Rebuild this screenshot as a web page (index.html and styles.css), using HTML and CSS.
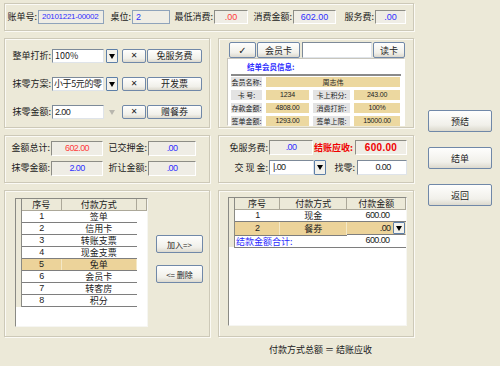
FILE: index.html
```html
<!DOCTYPE html>
<html lang="zh-CN">
<head>
    <meta charset="UTF-8">
    <title>结账</title>
    <link rel="stylesheet" href="styles.css">
</head>
<body>
<div class="app">
    <div class="main">
        <!-- 账单信息 -->
        <div class="panel topbar">
            <span class="lbl">账单号:</span><span class="box flat blue num left bill">20101221-00002</span>
            <span class="lbl">桌位:</span><span class="box flat blue num left">2</span>
            <span class="lbl">最低消费:</span><span class="box red num">.00</span>
            <span class="lbl">消费金额:</span><span class="box blue num">602.00</span>
            <span class="lbl">服务费:</span><span class="box blue num">.00</span>
        </div>

        <div class="row">
            <!-- 折扣与抹零 -->
            <div class="panel options">
                <div class="opt">
                    <span class="lbl">整单打折:</span><span class="input">100%</span><span class="dd"></span>
                    <button class="btn x">✕</button><button class="btn wide">免服务费</button>
                </div>
                <div class="opt">
                    <span class="lbl">抹零方案:</span><span class="input tight">小于5元的零</span><span class="dd"></span>
                    <button class="btn x">✕</button><button class="btn wide">开发票</button>
                </div>
                <div class="opt">
                    <span class="lbl">抹零金额:</span><span class="input num">2.00</span><span class="dd off"></span>
                    <button class="btn x">✕</button><button class="btn wide">赠餐券</button>
                </div>
            </div>

            <!-- 会员卡 -->
            <div class="panel member">
                <div class="cardbar">
                    <button class="btn check">✓</button><button class="btn card">会员卡</button><span class="input cardno"></span><button class="btn read">读卡</button>
                </div>
                <div class="info">
                    <div class="info-title">结单会员信息:</div>
                    <div class="info-grid">
                        <span class="k">会员名称:</span><span class="v all">周志伟</span>
                        <span class="k">卡 号:</span><span class="v num">1234</span><span class="k">卡上积分:</span><span class="v num">243.00</span>
                        <span class="k">存款金额:</span><span class="v num">4808.00</span><span class="k">消费打折:</span><span class="v num">100%</span>
                        <span class="k">签单金额:</span><span class="v num">1293.00</span><span class="k">签单上限:</span><span class="v num">15000.00</span>
                    </div>
                </div>
            </div>
        </div>

        <div class="row sums">
            <div class="panel totals">
                <span class="lbl">金额总计:</span><span class="box red num">602.00</span>
                <span class="lbl">已交押金:</span><span class="box blue num">.00</span>
                <span class="lbl">抹零金额:</span><span class="box blue num">2.00</span>
                <span class="lbl">折让金额:</span><span class="box blue num">.00</span>
            </div>
            <div class="panel settle">
                <div class="srow">
                    <span class="lbl l1">免服务费:</span><span class="box blue num fee">.00</span>
                    <span class="lbl due">结账应收:</span><span class="box due-box num">600.00</span>
                </div>
                <div class="srow">
                    <span class="lbl l1">交 现 金:</span><span class="input num cash">|.00</span><span class="dd"></span>
                    <span class="lbl chg">找零:</span><span class="input num change">0.00</span>
                </div>
            </div>
        </div>

        <div class="row lists">
            <div class="panel methods">
                <div class="grid left-grid">
                    <table>
                        <thead>
                            <tr><th class="ind"></th><th class="c1">序号</th><th class="c2">付款方式</th><th class="c3"></th></tr>
                        </thead>
                        <tbody>
                            <tr><td class="ind"></td><td class="num">1</td><td>签单</td><td class="pad"></td></tr>
                            <tr><td class="ind"></td><td class="num">2</td><td>信用卡</td><td class="pad"></td></tr>
                            <tr><td class="ind"></td><td class="num">3</td><td>转账支票</td><td class="pad"></td></tr>
                            <tr><td class="ind"></td><td class="num">4</td><td>现金支票</td><td class="pad"></td></tr>
                            <tr class="sel"><td class="ind"></td><td class="num">5</td><td>免单</td><td class="pad"></td></tr>
                            <tr><td class="ind"></td><td class="num">6</td><td>会员卡</td><td class="pad"></td></tr>
                            <tr><td class="ind"></td><td class="num">7</td><td>转客房</td><td class="pad"></td></tr>
                            <tr><td class="ind"></td><td class="num">8</td><td>积分</td><td class="pad"></td></tr>
                        </tbody>
                    </table>
                </div>
                <div class="move">
                    <button class="btn">加入=&gt;</button>
                    <button class="btn">&lt;= 删除</button>
                </div>
            </div>
            <div class="panel paid">
                <div class="grid right-grid">
                    <table>
                        <thead>
                            <tr><th class="ind"></th><th class="p1">序号</th><th class="p2">付款方式</th><th class="p3">付款金额</th></tr>
                        </thead>
                        <tbody>
                            <tr><td class="ind"></td><td class="num">1</td><td>现金</td><td class="num amt">600.00</td></tr>
                            <tr class="sel"><td class="ind"></td><td class="num">2</td><td>餐券</td><td class="edit"><span class="num">.00</span><span class="dd"></span></td></tr>
                            <tr class="total"><td class="ind"></td><td colspan="2" class="sum-lbl">结款金额合计:</td><td class="num amt">600.00</td></tr>
                        </tbody>
                    </table>
                </div>
            </div>
        </div>

        <div class="footer">付款方式总额 ＝ 结账应收</div>
    </div>

    <div class="side">
        <button class="btn big">预结</button>
        <button class="btn big">结单</button>
        <button class="btn big">返回</button>
    </div>
</div>
</body>
</html>
```

FILE: styles.css
```css
body {
    margin: 0;
    width: 500px;
    height: 366px;
    background: #ece9d8;
    font-family: "Noto Sans CJK SC", sans-serif;
    font-size: 9px;
    color: #222;
    overflow: hidden;
}
button {
    font-family: inherit;
    font-size: 9px;
    color: #222;
    padding: 0;
    cursor: pointer;
}
.app {
    display: grid;
    grid-template-columns: 410px 64px;
    column-gap: 14px;
    padding: 3px 0 0 4px;
}
.panel {
    box-sizing: border-box;
    border: 1px solid #cdc9b8;
    box-shadow: inset 1px 1px 0 #fbfaf5, 1px 1px 0 #fbfaf5;
}
.row {
    display: grid;
    grid-template-columns: 206px 196px;
    column-gap: 8px;
    margin-top: 7px;
}
.lbl {
    text-align: right;
    padding-right: 1px;
    white-space: nowrap;
    line-height: 14px;
}
.num {
    font-family: "Liberation Sans", sans-serif;
    letter-spacing: -0.6px;
}

/* 只读框 */
.box {
    box-sizing: border-box;
    height: 14px;
    line-height: 12px;
    text-align: center;
    background: #efede5;
    border: 1px solid;
    border-color: #8d8d86 #fff #fff #8d8d86;
    overflow: hidden;
    white-space: nowrap;
}
.box.flat {
    border-color: #8fa3bb;
}
.box.left {
    text-align: left;
    padding-left: 3px;
}
.blue { color: #2f2fff; }
.red { color: #ff3b3b; }

.input {
    box-sizing: border-box;
    height: 14px;
    line-height: 12px;
    background: #fff;
    border: 1px solid;
    border-color: #7d8a99 #dfe4ea #dfe4ea #7d8a99;
    padding-left: 2px;
    white-space: nowrap;
    overflow: hidden;
}
.input.tight {
    padding-left: 1px;
    letter-spacing: -0.4px;
}
.dd {
    box-sizing: border-box;
    width: 12px;
    height: 14px;
    border: 1px solid #5d7fa8;
    border-radius: 1px;
    background: #f3f2ec;
    display: flex;
    align-items: center;
    justify-content: center;
}
.dd::after {
    content: "";
    border-left: 3px solid transparent;
    border-right: 3px solid transparent;
    border-top: 5px solid #000;
}
.dd.off {
    border-color: transparent;
    background: transparent;
}
.dd.off::after {
    border-top-color: #b8b6ae;
}
.btn {
    box-sizing: border-box;
    border: 1px solid #7088a8;
    border-radius: 2px;
    background: linear-gradient(#fefefd, #f1f0ea 70%, #dcd9ce);
}

/* 账单信息 */
.topbar {
    height: 28px;
    display: grid;
    grid-template-columns: 33px 66px 28px 38px 44px 34px 45px 43px 39px 31px;
    align-items: center;
}
.topbar .num { letter-spacing: 0; }
.topbar .box.bill {
    font-size: 8px;
    letter-spacing: -0.3px;
}

/* 折扣与抹零 */
.options {
    height: 90px;
    padding-top: 10px;
    display: flex;
    flex-direction: column;
    gap: 14px;
}
.opt {
    display: flex;
    align-items: center;
}
.opt .lbl { width: 46px; }
.opt .input { width: 52px; }
.opt .dd { margin-left: 2px; }
.opt .x {
    width: 24px;
    height: 14px;
    margin-left: 4px;
    font-family: "DejaVu Sans", sans-serif;
    font-size: 8px;
    line-height: 12px;
}
.opt .wide {
    width: 55px;
    height: 14px;
    margin-left: 1px;
    line-height: 12px;
}

/* 会员卡 */
.member {
    height: 90px;
    padding: 3px 0 0 10px;
}
.cardbar {
    display: flex;
    align-items: center;
    height: 16px;
}
.cardbar .btn { height: 16px; }
.check {
    width: 27px;
    font-family: "DejaVu Sans", sans-serif;
    font-size: 10px;
}
.card { width: 43px; margin-left: 1px; }
.cardno { width: 70px; height: 16px; margin-left: 2px; }
.read { width: 32px; margin-left: 1px; }
.info {
    box-sizing: border-box;
    width: 178px;
    height: 68px;
    margin-left: -2px;
    background: #fff;
    border: 1px solid;
    border-color: #c8c6bd #fff #fff #c8c6bd;
    padding: 3px 3px 0 3px;
}
.info-title {
    height: 10px;
    line-height: 10px;
    padding-left: 16px;
    font-size: 7.5px;
    color: #2c2cff;
    font-weight: bold;
}
.info-grid {
    border-top: 2px solid #8a8a8a;
    margin-top: 2px;
    padding-top: 1px;
    display: grid;
    grid-template-columns: 31px 43px 37px 46px;
    grid-auto-rows: 10px;
    column-gap: 4px;
    row-gap: 3px;
    font-size: 7px;
}
.k {
    background: #e3e3e3;
    line-height: 10px;
    text-align: center;
    white-space: nowrap;
}
.v {
    background: #ecd8a0;
    line-height: 10px;
    text-align: center;
    white-space: nowrap;
}
.v.all { grid-column: span 3; }
.v.num { letter-spacing: -0.2px; }

/* 合计 */
.sums { margin-top: 7px; }
.totals {
    height: 48px;
    padding-top: 5px;
    display: grid;
    grid-template-columns: 46px 52px 45px 48px;
    grid-auto-rows: 15px;
    row-gap: 5px;
    align-content: start;
}
.totals .box { height: 15px; line-height: 13px; }
.settle {
    height: 48px;
    padding-top: 4px;
    display: flex;
    flex-direction: column;
    gap: 5px;
}
.srow {
    display: flex;
    align-items: center;
    height: 15px;
}
.srow .lbl.l1 { width: 49px; }
.fee { width: 44px; height: 15px; line-height: 13px; }
.due {
    width: 42px;
    padding-right: 2px;
    box-sizing: border-box;
    color: #f00000;
    font-weight: bold;
}
.due-box {
    width: 52px;
    height: 15px;
    line-height: 13px;
    color: #f00000;
    font-weight: bold;
    font-size: 10px;
    letter-spacing: 0.3px;
}
.cash { width: 45px; height: 15px; line-height: 13px; padding-left: 3px; }
.srow .dd { height: 15px; }
.chg {
    width: 31px;
    padding-right: 2px;
    box-sizing: border-box;
}
.change {
    width: 50px;
    height: 15px;
    line-height: 13px;
    text-align: center;
}

/* 付款方式列表 */
.lists { margin-top: 7px; }
.methods {
    height: 147px;
    padding: 7px 0 0 10px;
    display: flex;
}
.paid {
    height: 147px;
    padding: 6px 0 0 9px;
}
.grid {
    box-sizing: border-box;
    height: 129px;
    background: #fff;
    border: 1px solid;
    border-color: #8a8a84 #f6f6f2 #f6f6f2 #8a8a84;
}
.left-grid { width: 133px; }
.right-grid { width: 179px; }
table {
    border-collapse: collapse;
    table-layout: fixed;
}
th {
    height: 11px;
    padding: 0;
    font-weight: normal;
    line-height: 10px;
    background: #ece9d8;
    border-right: 1px solid #aca899;
    border-bottom: 1px solid #aca899;
}
td {
    height: 11px;
    padding: 0;
    line-height: 11px;
    text-align: center;
    border-bottom: 1px solid #7e7e7e;
}
td.ind, th.ind {
    background: #ece9d8;
    border-bottom: 0;
    border-right: 1px solid #8a8a84;
}
td.pad { border-bottom: 0; }
.ind { width: 5px; }
.c1 { width: 39px; }
.c2 { width: 75px; }
.c3 { width: 9px; }
.p1 { width: 45px; }
.p2 { width: 67px; }
.p3 { width: 58px; }
tr.sel td:not(.ind):not(.pad) {
    background: #ecd39a;
    border-right: 1px solid #f4e8c6;
}
tr.sel td.edit {
    background: #f3e7c3;
    display: flex;
    align-items: center;
    justify-content: flex-end;
    height: 12px;
    border-right: 0;
}
.edit .num { margin-right: 2px; }
.edit .dd { height: 12px; }
td.amt {
    text-align: right;
    padding-right: 16px;
}
.sum-lbl {
    text-align: left;
    padding-left: 1px;
    color: #2c2cff;
}
.move {
    margin-left: 8px;
    padding-top: 37px;
    display: flex;
    flex-direction: column;
    gap: 12px;
}
.move .btn {
    width: 47px;
    height: 18px;
    font-size: 8px;
}

.footer {
    margin-top: 8px;
    padding-left: 265px;
    line-height: 10px;
}

/* 操作按钮 */
.side {
    padding-top: 107px;
    display: flex;
    flex-direction: column;
    gap: 15px;
}
.big {
    width: 64px;
    height: 22px;
}
```
